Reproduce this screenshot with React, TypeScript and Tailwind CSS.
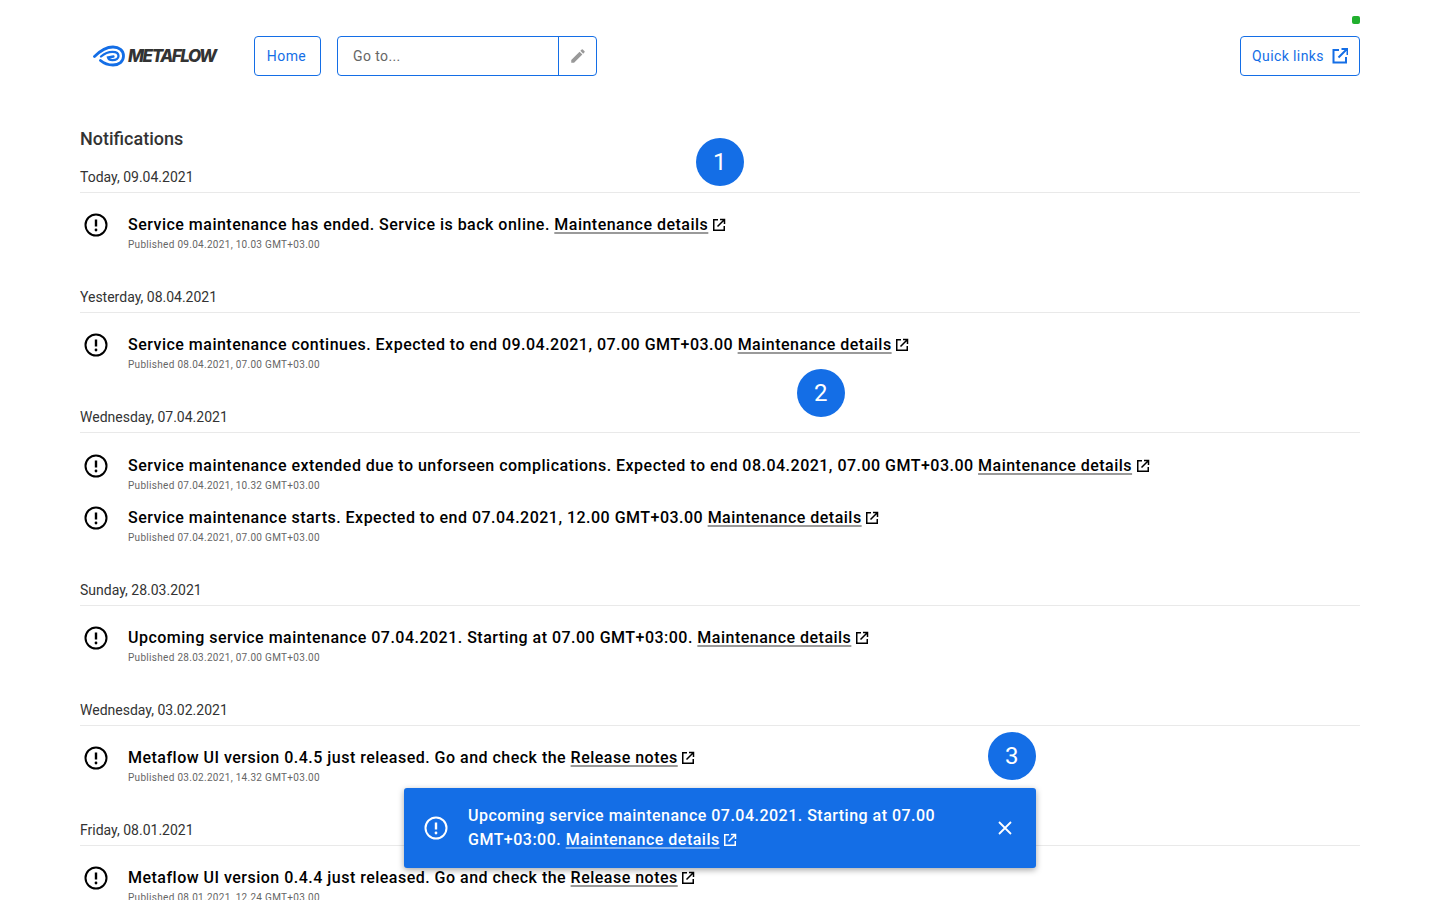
const AlertIcon = ({ className }: { className: string }) => (
  <svg viewBox="0 0 24 24" className={className} fill="none" stroke="currentColor">
    <circle cx="12" cy="12" r="10.5" strokeWidth="2" />
    <path d="M12 6.5v7" strokeWidth="2.4" />
    <circle cx="12" cy="17" r="1.4" fill="currentColor" stroke="none" />
  </svg>
);

const ExternalIcon = ({ className }: { className: string }) => (
  <svg viewBox="0 0 14 14" className={className} fill="none" stroke="currentColor" strokeWidth="1.5">
    <path d="M6 1.75H1.75v10.5h10.5V8" />
    <path d="M5.5 8.5 12 2M8 1.5h4.5V6" />
  </svg>
);

const DetailLink = ({ label, light }: { label: string; light?: boolean }) => (
  <span className="whitespace-nowrap">
    <span
      className={
        light
          ? "underline decoration-2 underline-offset-[2px] decoration-[#7fb0f0]"
          : "underline decoration-2 underline-offset-[2px] decoration-[#9a9a9a]"
      }
    >
      {label}
    </span>
    <ExternalIcon className="inline-block w-[14px] h-[14px] ml-[3.5px] align-[-2px]" />
  </span>
);

interface Item {
  text: string;
  link: string;
  published: string;
}

interface Group {
  date: string;
  items: Item[];
}

const groups: Group[] = [
  {
    date: "Today, 09.04.2021",
    items: [
      {
        text: "Service maintenance has ended. Service is back online.",
        link: "Maintenance details",
        published: "Published 09.04.2021, 10.03 GMT+03.00",
      },
    ],
  },
  {
    date: "Yesterday, 08.04.2021",
    items: [
      {
        text: "Service maintenance continues. Expected to end 09.04.2021, 07.00 GMT+03.00",
        link: "Maintenance details",
        published: "Published 08.04.2021, 07.00 GMT+03.00",
      },
    ],
  },
  {
    date: "Wednesday, 07.04.2021",
    items: [
      {
        text: "Service maintenance extended due to unforseen complications. Expected to end 08.04.2021, 07.00 GMT+03.00",
        link: "Maintenance details",
        published: "Published 07.04.2021, 10.32 GMT+03.00",
      },
      {
        text: "Service maintenance starts. Expected to end 07.04.2021, 12.00 GMT+03.00",
        link: "Maintenance details",
        published: "Published 07.04.2021, 07.00 GMT+03.00",
      },
    ],
  },
  {
    date: "Sunday, 28.03.2021",
    items: [
      {
        text: "Upcoming service maintenance 07.04.2021. Starting at 07.00 GMT+03:00.",
        link: "Maintenance details",
        published: "Published 28.03.2021, 07.00 GMT+03.00",
      },
    ],
  },
  {
    date: "Wednesday, 03.02.2021",
    items: [
      {
        text: "Metaflow UI version 0.4.5 just released. Go and check the",
        link: "Release notes",
        published: "Published 03.02.2021, 14.32 GMT+03.00",
      },
    ],
  },
  {
    date: "Friday, 08.01.2021",
    items: [
      {
        text: "Metaflow UI version 0.4.4 just released. Go and check the",
        link: "Release notes",
        published: "Published 08.01.2021, 12.24 GMT+03.00",
      },
    ],
  },
];

const Logo = () => (
  <div className="flex items-center w-[174px] pl-[13px]">
    <svg viewBox="0 0 32 22" className="w-[32px] h-[22px] shrink-0" fill="none" stroke="#146ee6" strokeLinecap="round">
      <path d="M1.5 11.5 C7 6 13 2 20 2 C26 2 30.5 5.5 30.5 11 C30.5 16.5 26 20 20 20 C16 20 11 18.5 7.5 15.5" strokeWidth="2.8" />
      <path d="M8 11.5 C12 8 16 6.8 19.5 6.8 C23.5 6.8 25.5 8.7 25.5 11 C25.5 13.5 23 15.2 19.5 15.2 C17.5 15.2 15.5 14.5 15 12.5 L20.5 11.5" strokeWidth="2.3" />
    </svg>
    <span className="ml-[3px] font-['Inter',sans-serif] italic font-extrabold text-[17px] leading-none tracking-[-1.45px] text-[#333]">
      METAFLOW
    </span>
  </div>
);

const Badge = ({ n, className }: { n: number; className: string }) => (
  <div
    className={`absolute w-12 h-12 rounded-full bg-[#146ee6] text-white text-2xl flex items-center justify-center ${className}`}
  >
    {n}
  </div>
);

export default function App() {
  return (
    <div className="relative h-screen overflow-hidden bg-white px-20 font-['Roboto',sans-serif] tracking-[0.3px]">
      <div className="absolute top-4 right-20 w-2 h-2 rounded-[2px] bg-[#20af2e]" />

      <header className="flex items-center pt-9 h-[76px]">
        <Logo />
        <button className="h-10 w-[67px] pr-[2px] border border-[#146ee6] rounded text-[#146ee6] text-sm tracking-[0.4px]">
          Home
        </button>
        <div className="ml-4 h-10 w-[260px] flex border border-[#146ee6] rounded">
          <div className="flex-1 pl-[15px] flex items-center text-sm text-[#666] tracking-[0.4px]">Go to...</div>
          <div className="w-[38px] border-l border-[#146ee6] flex items-center justify-center text-[#999]">
            <svg viewBox="0 0 24 24" className="w-[18px] h-[18px]" fill="currentColor">
              <path d="M3 17.25V21h3.75L17.81 9.94l-3.75-3.75L3 17.25zM20.71 7.04a1 1 0 0 0 0-1.41l-2.34-2.34a1 1 0 0 0-1.41 0l-1.83 1.83 3.75 3.75 1.83-1.83z" />
            </svg>
          </div>
        </div>
        <button className="ml-auto h-10 w-[120px] pl-[11px] border border-[#146ee6] rounded text-[#146ee6] text-sm tracking-[0.4px] flex items-center gap-2">
          Quick links
          <svg viewBox="0 0 16 16" className="w-4 h-4" fill="none" stroke="currentColor" strokeWidth="2">
            <path d="M7 2H1.5v12.5H14V9" />
            <path d="M6.5 9.5 14.5 1.5M9.5 1h6v6" />
          </svg>
        </button>
      </header>

      <h1 className="mt-[51px] text-lg leading-6 font-medium text-[#333] tracking-normal">Notifications</h1>

      <main className="mt-4">
        {groups.map((group) => (
          <section key={group.date} className="pb-[22.05px]">
            <div className="pb-[4.8px] text-sm leading-5 text-[#333] tracking-normal border-b border-[#e9e9e9]">
              {group.date}
            </div>
            <div className="pt-[20.4px]">
              {group.items.map((item) => (
                <div key={item.text} className="flex h-[52px]">
                  <AlertIcon className="w-6 h-6 ml-1 shrink-0 text-black" />
                  <div className="ml-5">
                    <p className="text-base leading-6 font-medium tracking-[0.486px] text-black">
                      {item.text} <DetailLink label={item.link} />
                    </p>
                    <p className="text-[10px] leading-4 text-[#666]">{item.published}</p>
                  </div>
                </div>
              ))}
            </div>
          </section>
        ))}
      </main>

      <Badge n={1} className="left-[696px] top-[138px]" />
      <Badge n={2} className="left-[797px] top-[369px]" />
      <Badge n={3} className="left-[988px] top-[732px]" />

      <div className="absolute left-[404px] top-[788px] w-[632px] h-20 bg-[#146ee6] rounded-[3px] shadow-[0_2px_6px_rgba(0,0,0,0.35)] flex items-center text-white">
        <AlertIcon className="w-6 h-6 ml-5 shrink-0" />
        <p className="ml-5 w-[500px] text-base leading-6 font-medium tracking-[0.486px]">
          Upcoming service maintenance 07.04.2021. Starting at 07.00 GMT+03:00.{" "}
          <DetailLink label="Maintenance details" light />
        </p>
        <svg viewBox="0 0 16 16" className="ml-auto mr-[23px] w-4 h-4" fill="none" stroke="currentColor" strokeWidth="1.8">
          <path d="M2 2l12 12M14 2 2 14" />
        </svg>
      </div>
    </div>
  );
}
